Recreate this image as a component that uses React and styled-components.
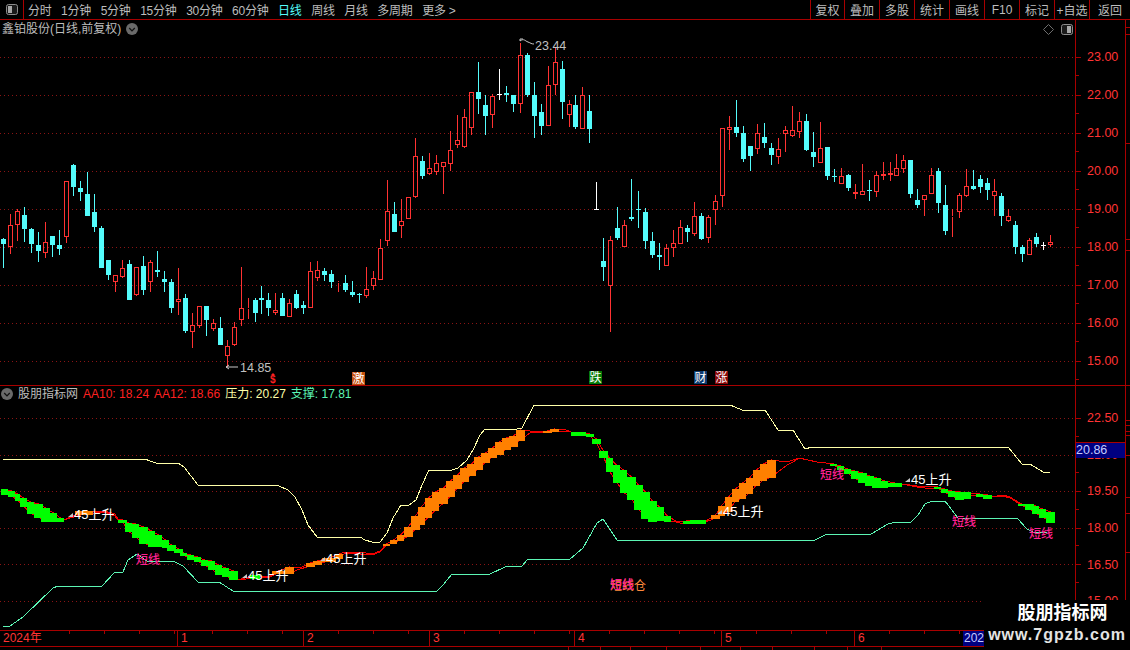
import React from "react"
import styled, { createGlobalStyle } from "styled-components"

const RED_LINE = "#a80000"
const AXIS_RED = "#ff3434"
const CYAN = "#54fcfc"
const GREY = "#bdbdbd"
const FONT = `"Liberation Sans", "Noto Sans CJK SC", sans-serif`

const GlobalStyle = createGlobalStyle`
  html, body {
    margin: 0;
    background: #000;
  }
  body {
    width: 1130px;
    height: 650px;
    overflow: hidden;
    font-family: ${FONT};
    font-size: 12px;
  }
`

const Page = styled.div`
  position: relative;
  width: 1130px;
  height: 650px;
  background: #000;
  display: flex;
  flex-direction: column;
  overflow: hidden;
`

const Toolbar = styled.div`
  height: 19px;
  display: flex;
  align-items: stretch;
  border-bottom: 1px solid ${RED_LINE};
  color: ${GREY};
  flex: none;
`
const ToggleCell = styled.div`
  width: 23px;
  display: flex;
  align-items: center;
  justify-content: center;
  border-right: 1px solid ${RED_LINE};
`
const NavList = styled.div`
  display: flex;
  align-items: center;
  gap: 9.6px;
  padding-left: 4px;
  flex: 1;
`
const NavItem = styled.span`
  color: ${p => (p.$active ? CYAN : GREY)};
  white-space: nowrap;
  letter-spacing: -0.25px;
`
const ToolGroup = styled.div`
  display: flex;
`
const ToolButton = styled.div`
  width: ${p => p.$w}px;
  box-sizing: border-box;
  display: flex;
  align-items: center;
  justify-content: center;
  border-left: 1px solid ${RED_LINE};
  white-space: nowrap;
`

const Pane = styled.div`
  height: ${p => p.$h}px;
  display: flex;
  flex: none;
  border-bottom: ${p => (p.$divider ? `1px solid ${RED_LINE}` : "none")};
`
const Canvas = styled.div`
  position: relative;
  width: 1075px;
  flex: none;
`
const ChartSvg = styled.svg`
  display: block;
  font-family: ${FONT};
`
const PaneHeader = styled.div`
  position: absolute;
  left: ${p => p.$left}px;
  top: ${p => p.$top}px;
  display: flex;
  align-items: center;
  gap: ${p => p.$gap}px;
  line-height: 14px;
  white-space: nowrap;
  color: ${GREY};
`
const Reading = styled.span`
  color: ${p => p.$color};
`
const CornerIcons = styled.div`
  position: absolute;
  right: 2px;
  top: 4px;
  display: flex;
  align-items: center;
  gap: 7px;
`

const Axis = styled.div`
  position: relative;
  width: 51px;
  flex: none;
  box-sizing: border-box;
  border-left: 1px solid ${RED_LINE};
  border-right: 1px solid ${RED_LINE};
  padding-top: ${p => p.$top}px;
  color: ${AXIS_RED};
  overflow: hidden;
`
const AxisRow = styled.div`
  position: relative;
  height: ${p => p.$h}px;
  display: flex;
  align-items: center;
  padding-left: 5px;
  gap: 6px;
  font-size: 12.5px;

  &::before {
    content: "";
    width: 5px;
    height: 1px;
    background: ${RED_LINE};
    margin-left: -5px;
  }
  &::after {
    content: "";
    position: absolute;
    left: 0;
    bottom: 0;
    width: 3px;
    height: 1px;
    background: ${RED_LINE};
  }
`
const LastPrice = styled.div`
  position: absolute;
  left: 0;
  top: 56px;
  width: 100%;
  height: 16px;
  box-sizing: border-box;
  border-top: 1px solid ${RED_LINE};
  background: #000080;
  color: #c4cbff;
  font-size: 12.5px;
  line-height: 15px;
`
const Rail = styled.svg`
  display: block;
  width: 4px;
  flex: none;
`

const DateBar = styled.div`
  height: 17px;
  flex: none;
  display: flex;
  box-sizing: border-box;
  border-top: 1px solid ${RED_LINE};
  border-bottom: 1px solid ${RED_LINE};
`
const DateCell = styled.div`
  width: ${p => p.$w}px;
  flex: none;
  box-sizing: border-box;
  padding-left: 3px;
  border-left: ${p => (p.$first ? "none" : `1px solid ${RED_LINE}`)};
  color: ${AXIS_RED};
  line-height: 15px;
  background: linear-gradient(90deg, ${RED_LINE} 1px, transparent 1px) 34px 0 / 35px 3px repeat-x;
`
const YearCell = styled.div`
  width: 21px;
  flex: none;
  padding-left: 1px;
  box-sizing: border-box;
  background: #000080;
  color: #c4cbff;
  line-height: 15px;
  overflow: hidden;
`
const TabStrip = styled.div`
  flex: 1;
  display: flex;
`
const Tab = styled.div`
  width: ${p => p.$w}px;
  flex: none;
  border-right: 1px solid ${RED_LINE};
`

const Watermark = styled.div`
  position: absolute;
  right: 0;
  bottom: 0;
  width: 146px;
  height: 50px;
  background: #000;
  color: #fff;
  display: flex;
  flex-direction: column;
  align-items: center;
  font-weight: 700;
`
const WatermarkTitle = styled.div`
  font-size: 18px;
  line-height: 26px;
  padding-left: 11px;
`
const WatermarkUrl = styled.div`
  font-size: 16px;
  line-height: 18px;
  letter-spacing: 1px;
  color: #e4e4e4;
`

// colour, wick top, body top, body bottom, wick bottom (page pixels)
const candles = [
  ["c",238,239,244,268],["r",214,225,247,254],["r",209,211,225,241],["c",207,215,229,242],["c",228,229,244,253],
  ["c",232,245,251,262],["r",222,242,253,258],["c",236,236,245,257],["c",230,245,249,255],["r",181,181,237,243],
  ["c",164,165,187,196],["c",181,188,192,201],["c",172,194,216,216],["c",194,212,227,232],["c",226,228,268,268],
  ["c",260,260,275,280],["r",275,275,282,292],["r",260,268,277,278],["c",260,264,300,300],["r",267,267,295,296],
  ["c",256,266,290,295],["r",260,262,282,292],["c",251,270,272,277],["c",271,279,282,292],["c",279,282,308,313],
  ["r",268,299,302,315],["c",294,298,331,333],["r",313,325,332,348],["r",306,306,326,328],["c",306,306,320,336],
  ["r",319,323,329,331],["c",317,328,345,345],["r",340,346,356,367],["r",322,327,345,346],["r",267,308,320,326],
  ["r",298,308,309,319],["c",298,300,313,322],["c",286,298,300,314],["c",293,300,308,316],["r",293,310,313,315],
  ["c",293,298,316,316],["r",299,303,317,317],["c",290,294,308,309],["c",301,305,308,314],["r",262,271,308,308],
  ["r",261,270,278,281],["c",268,271,275,281],["c",270,274,282,288],["r",281,282,283,292],["c",275,283,290,292],
  ["c",281,292,295,297],["c",293,294,295,303],["r",267,289,296,298],["r",271,278,286,290],["r",239,248,280,280],
  ["r",180,211,241,246],["c",202,214,232,232],["r",199,221,226,238],["r",197,197,219,219],["r",138,156,197,198],
  ["c",156,161,176,179],["r",153,168,174,175],["r",155,163,172,175],["r",162,162,167,194],["r",131,150,164,171],
  ["r",115,140,145,148],["r",109,117,147,148],["r",92,92,128,135],["c",62,92,99,114],["c",95,105,116,135],
  ["r",94,96,115,128],["w",69,94,95,100],["c",86,93,95,102],["c",95,95,104,112],["r",43,55,104,113],
  ["c",53,55,95,97],["c",82,95,116,138],["c",104,112,126,135],["r",66,85,126,126],["r",48,62,85,95],
  ["c",61,69,102,119],["r",100,104,115,127],["c",95,105,127,129],["r",87,95,129,129],["c",95,111,129,143],
  ["w",182,209,210,210],["c",238,261,267,281],["r",236,240,286,332],["c",207,228,238,240],["r",220,225,247,247],
  ["c",179,217,219,221],["c",191,209,210,228],["c",208,212,241,249],["c",232,241,255,258],["c",243,255,257,270],
  ["r",244,248,266,266],["r",230,243,248,257],["r",220,227,244,244],["c",225,228,232,242],["r",202,216,234,236],
  ["c",213,216,239,240],["r",215,217,238,243],["r",195,201,210,225],["r",128,128,196,207],["r",116,127,130,150],
  ["c",100,127,133,137],["c",126,133,159,162],["c",146,146,156,171],["r",124,133,149,154],["c",123,137,143,148],
  ["c",143,148,155,165],["r",138,149,157,164],["r",126,130,134,152],["r",106,130,136,137],["r",112,121,132,138],
  ["c",114,121,150,151],["c",132,152,157,167],["r",122,148,163,163],["c",147,147,176,180],["c",169,176,177,182],
  ["r",168,176,184,184],["c",174,175,188,191],["r",184,192,194,199],["r",164,191,195,195],["c",180,190,191,201],
  ["r",171,175,192,197],["r",162,174,176,180],["r",162,173,175,181],["r",154,168,176,176],["r",155,160,169,173],
  ["c",160,160,194,198],["c",189,200,205,208],["r",195,195,200,216],["r",168,175,194,194],["c",168,171,203,213],
  ["c",185,205,231,235],["r",209,216,217,237],["r",193,195,212,218],["r",169,186,196,197],["c",170,186,189,190],
  ["c",175,179,187,193],["c",178,183,190,200],["r",179,191,196,216],["c",193,196,216,226],["r",209,216,221,222],
  ["c",221,225,247,254],["c",245,247,254,262],["r",238,240,255,255],["c",233,237,244,247],["w",242,245,246,250],
  ["r",235,242,245,247],
]

// band between the two moving averages: x0, x1, y0, y1
const greenBlocks = [
  [1,8,489,495],[8,15,491,497],[15,20,494,501],[20,27,498,507],[27,34,502,514],[34,43,504,518],[41,50,508,522],
  [50,57,513,522],[57,64,518,522],[118,127,520,523],[125,132,523,532],[132,139,524,538],[139,148,527,544],
  [148,155,531,547],[155,162,535,547],[162,169,540,548],[167,176,545,551],[174,183,549,553],[180,187,553,556],
  [187,194,555,560],[194,201,557,562],[201,208,560,566],[208,215,561,570],[215,222,565,575],[222,229,568,577],
  [229,238,571,580],[250,260,575,579],[571,586,432,436],[586,594,434,437],[592,601,439,444],[599,608,451,458],
  [606,613,458,472],[613,620,465,483],[620,627,470,493],[627,636,477,500],[634,643,485,510],[641,650,492,519],
  [648,657,501,522],[655,664,507,521],[664,671,516,522],[683,690,521,524],[690,706,520,524],[830,837,464,466],
  [837,844,466,470],[844,851,469,474],[851,858,471,479],[858,867,473,483],[865,874,476,486],[872,881,478,488],
  [881,888,481,488],[888,902,483,487],[934,941,487,489],[941,948,489,493],[948,955,491,497],[955,964,492,500],
  [964,971,492,499],[976,983,494,497],[983,992,495,499],[1018,1025,504,506],[1025,1034,504,510],[1032,1039,506,514],
  [1039,1046,509,518],[1046,1055,512,523],
]
const orangeBlocks = [
  [75,93,511,515],[272,285,571,574],[285,294,567,574],[306,315,563,567],[313,322,561,565],[322,336,558,562],
  [336,343,554,559],[383,390,544,546],[390,397,540,544],[397,404,535,541],[404,413,527,537],[411,420,516,530],
  [418,425,507,525],[425,432,498,518],[432,439,492,511],[439,448,488,504],[446,455,481,497],[453,462,475,489],
  [460,469,468,482],[467,476,464,476],[474,483,457,470],[481,490,453,463],[488,497,448,458],[495,504,442,455],
  [502,511,438,450],[509,518,436,447],[516,525,430,441],[543,552,431,433],[550,559,429,432],[711,720,515,519],
  [718,725,506,516],[725,732,497,512],[732,739,489,502],[739,746,483,499],[746,753,478,494],[753,760,470,486],
  [760,767,464,481],[767,776,460,478],
]
// where the band is too thin to be filled: x, upper y, lower y
const thinBand = [
  [64,520,520],[70,517,518],[105,511,512],[115,514,516],[118,519,520],[238,580,580],[262,577,578],[270,576,577],
  [300,568,569],[345,552,553],[360,552,554],[372,554,555],[380,551,552],[530,431,433],[540,431,432],[566,430,431],
  [571,432,432],[676,521,522],[680,522,523],[706,521,522],[787,462,465],[793,460,462],[799,458,458],[817,462,462],
  [826,463,463],[902,484,484],[917,486,487],[925,486,488],[971,493,495],[992,497,497],[1003,495,496],[1010,497,498],
]

const resistance = [
  [3,459],[145,459],[150,461],[156,463],[178,463],[184,467],[198,485],[277,485],[288,490],[295,497],[302,510],[308,525],
  [317,537],[360,537],[365,540],[372,542],[380,542],[387,533],[393,518],[401,505],[409,505],[416,500],[422,485],[429,470],
  [452,470],[458,468],[467,460],[473,450],[480,435],[485,429],[517,429],[522,428],[534,405],[730,405],[735,407],[742,410],
  [765,410],[778,430],[793,430],[805,449],[812,447],[1008,447],[1022,464],[1030,464],[1043,472],[1050,472],
]
const support = [
  [3,626],[10,626],[23,617],[53,588],[58,586],[102,586],[115,572],[123,572],[128,560],[137,554],[147,561],[173,561],
  [183,566],[198,582],[219,582],[233,591],[437,591],[443,585],[452,574],[490,574],[505,567],[522,566],[528,559],[570,559],
  [583,548],[597,523],[603,519],[617,540],[815,540],[827,534],[871,534],[888,524],[896,522],[911,522],[918,515],[925,504],
  [932,501],[945,501],[958,518],[1017,518],[1027,529],[1033,532],[1047,532],
]

const bandEdge = which => {
  const pts = [
    ...[...greenBlocks, ...orangeBlocks].map(b => [(b[0] + b[1]) / 2, which === 0 ? b[2] : b[3] - 1]),
    ...thinBand.map(t => [t[0], t[1 + which]]),
  ]
  return pts.sort((a, b) => a[0] - b[0]).map(p => p.join(",")).join(" ")
}
const toPoints = list => list.map(p => p.join(",")).join(" ")

const upperGrid = [57, 95, 133, 171, 209, 247, 285, 323, 361]
const lowerGrid = [418, 455, 491, 528, 564, 601]
const riseLabels = [[68, 514], [242, 575], [320, 558], [717, 511], [905, 479]]
const shortLabels = [[136, 559], [820, 474], [952, 521], [1029, 533], [610, 584]]
const markers = [
  { x: 352, y: 372, bg: "#c4500f", text: "激" },
  { x: 589, y: 371, bg: "#067a06", text: "跌" },
  { x: 694, y: 371, bg: "#0c3a6e", text: "财" },
  { x: 715, y: 371, bg: "#8a0808", text: "涨" },
]

const Candle = ({ data, index }) => {
  const [kind, wt, bt, bb, wb] = data
  const x = Math.round(3.3 + 6.978 * index)
  if (kind === "w") {
    return (
      <g fill="#fff">
        <rect x={x} y={wt} width="1" height={wb - wt} />
        <rect x={x - 2} y={bt} width="5" height="1" />
      </g>
    )
  }
  if (kind === "c") {
    return (
      <g fill={CYAN}>
        <rect x={x} y={wt} width="1" height={wb - wt} />
        <rect x={x - 2} y={bt} width="5" height={Math.max(bb - bt, 1)} />
      </g>
    )
  }
  return (
    <g fill="#ff3232">
      <rect x={x} y={wt} width="1" height={bt - wt} />
      <rect x={x} y={bb} width="1" height={wb - bb} />
      <rect x={x - 1.5} y={bt + 0.5} width="4" height={Math.max(bb - bt - 1, 0)} fill="none" stroke="#ff3232" />
    </g>
  )
}

const GridLines = ({ rows }) =>
  rows.map(y => (
    <line key={y} x1="0" x2="1075" y1={y + 0.5} y2={y + 0.5} stroke="#8a1414" strokeDasharray="1 3" />
  ))

const PriceChart = () => (
  <ChartSvg width="1075" height="365" viewBox="0 20 1075 365">
    <g shapeRendering="crispEdges">
      <GridLines rows={upperGrid} />
      {candles.map((c, i) => (
        <Candle key={i} data={c} index={i} />
      ))}
      {markers.map(m => (
        <rect key={m.text} x={m.x} y={m.y} width="13" height="13" fill={m.bg} />
      ))}
    </g>
    {markers.map(m => (
      <text key={m.text} x={m.x + 0.5} y={m.y + 11} fontSize="12" fill="#fff">{m.text}</text>
    ))}
    <path d="M226 367h12M226 367l3-2M226 367l3 2" stroke="#c8c8c8" fill="none" />
    <text x="240" y="372" fontSize="12.5" fill="#c0c0c0">14.85</text>
    <path d="M520 41c4-3 5 0 8 1s3 2 6 2M520 41v-2h3" stroke="#c8c8c8" fill="none" />
    <text x="535" y="50" fontSize="12.5" fill="#c0c0c0">23.44</text>
    <path d="M273 373l-2 2h4z" fill="#ff2020" />
    <text x="270" y="383" fontSize="10" fontWeight="700" fill="#ff2020">$</text>
  </ChartSvg>
)

const IndicatorChart = () => (
  <ChartSvg width="1075" height="244" viewBox="0 386 1075 244">
    <g shapeRendering="crispEdges">
      <GridLines rows={lowerGrid} />
      <polyline points={toPoints(resistance)} fill="none" stroke="#ffffa8" />
      <polyline points={toPoints(support)} fill="none" stroke="#5cf5b4" />
      <polyline points={bandEdge(0)} fill="none" stroke="#f00000" />
      <polyline points={bandEdge(1)} fill="none" stroke="#f00000" />
      {greenBlocks.map((b, i) => (
        <rect key={i} x={b[0]} y={b[2]} width={b[1] - b[0]} height={b[3] - b[2]} fill="#00ff00" />
      ))}
      {orangeBlocks.map((b, i) => (
        <rect key={i} x={b[0]} y={b[2]} width={b[1] - b[0]} height={b[3] - b[2]} fill="#ff8000" />
      ))}
    </g>
    <text x="610" y="590" fontSize="12" fill="#ff8a3c">短线仓</text>
    {shortLabels.map(([x, y]) => (
      <text key={x} x={x} y={y + 5} fontSize="12" fontWeight="500" fill="#ff2090">短线</text>
    ))}
    {riseLabels.map(([x, y]) => (
      <g key={x}>
        <path d={`M${x} ${y + 3}l5-4v4z`} fill="#c8c8c8" />
        <text x={x + 6} y={y + 5} fontSize="13" fill="#fff">45上升</text>
      </g>
    ))}
  </ChartSvg>
)

const DropIcon = () => (
  <svg width="12" height="12" viewBox="0 0 13 13">
    <circle cx="6.5" cy="6.5" r="6.5" fill="#6a6a6a" />
    <path d="M3.5 5.5l3 3 3-3" fill="none" stroke="#111" strokeWidth="1.4" />
  </svg>
)

const PanelIcon = ({ side }) => (
  <svg width="12" height="11" viewBox="0 0 12 11">
    <rect x="0.5" y="0.5" width="11" height="10" rx="2" fill="#1a1a1a" stroke="#8c8c8c" />
    <rect x={side === "left" ? 2 : 6} y="2" width="4" height="7" fill="#a8a8a8" />
  </svg>
)

const DiamondIcon = () => (
  <svg width="11" height="11" viewBox="0 0 11 11">
    <path d="M5.5 0.5l5 5-5 5-5-5z" fill="none" stroke="#6e6e6e" />
  </svg>
)

const RailTicks = ({ height, rows, top }) => (
  <Rail height={height} viewBox={`0 ${top} 4 ${height}`}>
    {rows.map(y => (
      <rect key={y} x="0" y={y} width="4" height="1" fill={RED_LINE} />
    ))}
  </Rail>
)

const periods = ["分时", "1分钟", "5分钟", "15分钟", "30分钟", "60分钟", "日线", "周线", "月线", "多周期", "更多 >"]
const tools = [
  ["复权", 34], ["叠加", 35], ["多股", 35], ["统计", 35], ["画线", 35],
  ["F10", 35], ["标记", 35], ["+自选", 35], ["返回", 41],
]
const upperLabels = ["23.00", "22.00", "21.00", "20.00", "19.00", "18.00", "17.00", "16.00", "15.00"]
const lowerLabels = ["22.50", "21.00", "19.50", "18.00", "16.50", "15.00"]
const months = [["2024年", 177], ["1", 126], ["2", 126], ["3", 145], ["4", 147], ["5", 133], ["6", 109]]
const tabs = [568, 31, 29, 35, 33, 39, 31, 41, 32, 33]

const App = () => (
  <Page>
    <GlobalStyle />
    <Toolbar>
      <ToggleCell>
        <PanelIcon side="left" />
      </ToggleCell>
      <NavList>
        {periods.map(p => (
          <NavItem key={p} $active={p === "日线"}>{p}</NavItem>
        ))}
      </NavList>
      <ToolGroup>
        {tools.map(([label, w]) => (
          <ToolButton key={label} $w={w}>{label}</ToolButton>
        ))}
      </ToolGroup>
    </Toolbar>

    <Pane $h={365} $divider>
      <Canvas>
        <PriceChart />
        <PaneHeader $left={2} $top={2} $gap={5}>
          鑫铂股份(日线,前复权)
          <DropIcon />
        </PaneHeader>
        <CornerIcons>
          <DiamondIcon />
          <PanelIcon side="right" />
        </CornerIcons>
      </Canvas>
      <Axis $top={18}>
        {upperLabels.map(l => (
          <AxisRow key={l} $h={38}>{l}</AxisRow>
        ))}
      </Axis>
      <RailTicks height={365} top={20} rows={[27, 34, 143, 239, 250]} />
    </Pane>

    <Pane $h={244}>
      <Canvas>
        <IndicatorChart />
        <PaneHeader $left={1} $top={1} $gap={5}>
          <DropIcon />
          股朋指标网
          <Reading $color="#ff2020">AA10: 18.24</Reading>
          <Reading $color="#ff2020">AA12: 18.66</Reading>
          <Reading $color="#ffffa8">压力: 20.27</Reading>
          <Reading $color="#5cf5b4">支撑: 17.81</Reading>
        </PaneHeader>
      </Canvas>
      <Axis $top={14}>
        {lowerLabels.map(l => (
          <AxisRow key={l} $h={36.6}>{l}</AxisRow>
        ))}
        <LastPrice>20.86</LastPrice>
      </Axis>
      <RailTicks height={244} top={386} rows={[420, 425, 431, 435, 455, 497, 513, 552]} />
    </Pane>

    <DateBar>
      {months.map(([label, w], i) => (
        <DateCell key={label} $w={w} $first={i === 0}>{label}</DateCell>
      ))}
      <YearCell>202</YearCell>
    </DateBar>
    <TabStrip>
      {tabs.map((w, i) => (
        <Tab key={i} $w={w} />
      ))}
    </TabStrip>

    <Watermark>
      <WatermarkTitle>股朋指标网</WatermarkTitle>
      <WatermarkUrl>www.7gpzb.com</WatermarkUrl>
    </Watermark>
  </Page>
)

export default App
